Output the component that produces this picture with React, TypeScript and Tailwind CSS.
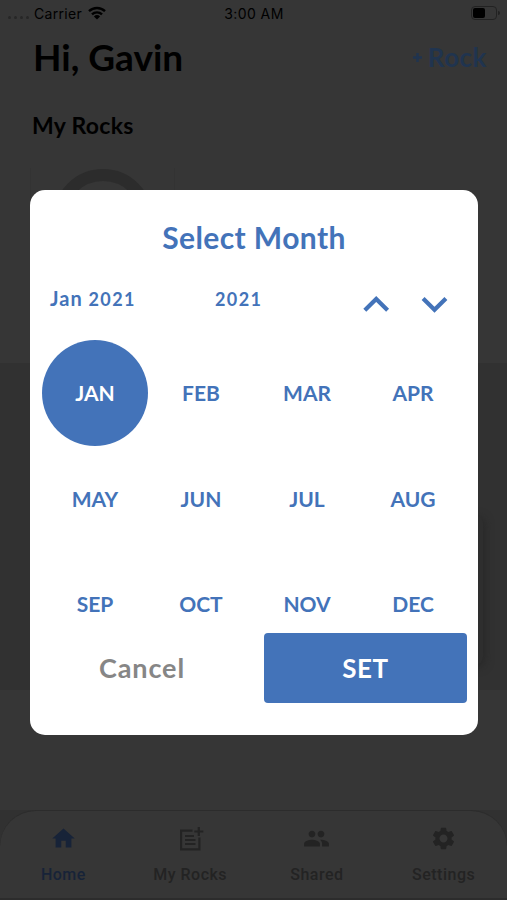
import { useState } from 'react';
import { MdHome, MdPeople, MdSettings } from 'react-icons/md';
import clsx from 'clsx';

const months = ['JAN', 'FEB', 'MAR', 'APR', 'MAY', 'JUN', 'JUL', 'AUG', 'SEP', 'OCT', 'NOV', 'DEC'];

function NoteAddIcon({ className }: { className?: string }) {
  return (
    <svg className={className} viewBox="0 0 27 27" fill="none" stroke="currentColor" strokeWidth="2.2">
      <path d="M15.5 5.6H4.1v18.8h18.3V12.5" />
      <path d="M8 11h9M8 15h10.5M8 19h10.5" />
      <path d="M21.8 2v9M17.3 6.5h9" />
    </svg>
  );
}

const tabs = [
  { name: 'Home', icon: MdHome, active: true },
  { name: 'My Rocks', icon: NoteAddIcon },
  { name: 'Shared', icon: MdPeople },
  { name: 'Settings', icon: MdSettings },
];

function StatusBar() {
  return (
    <div className="grid h-[26px] grid-cols-3 items-center pl-2 pr-[7px] font-['Inter',sans-serif] text-[14px] text-black">
      <div className="flex items-center">
        <div className="mt-2 flex w-[26px] gap-[3px]">
          {[0, 1, 2, 3].map((dot) => (
            <span key={dot} className="size-[3px] rounded-full bg-[#272727]" />
          ))}
        </div>
        <span className="tracking-[0.3px]">Carrier</span>
        <svg className="ml-[6px] h-[14px] w-[18px]" viewBox="0 0 18 14" fill="none" stroke="currentColor" strokeWidth="2.4">
          <path d="M1 5.2a11.5 11.5 0 0 1 16 0" />
          <path d="M4 8.4a7.2 7.2 0 0 1 10 0" />
          <path d="M9 13.6 5.9 10.4a4.5 4.5 0 0 1 6.2 0z" fill="currentColor" stroke="none" />
        </svg>
      </div>
      <span className="text-center tracking-[0.4px]">3:00 AM</span>
      <div className="flex items-center justify-end gap-px">
        <div className="h-[14px] w-[26px] rounded-[4px] border border-[#222] p-px">
          <div className="h-full w-[12px] rounded-[2px] bg-black" />
        </div>
        <div className="h-1 w-[2px] rounded-r bg-[#222]" />
      </div>
    </div>
  );
}

function TabBar() {
  return (
    <div className="h-[90px] bg-[#313131]">
      <div className="grid h-[88px] grid-cols-4 rounded-t-[36px] border-t border-[#2c2c2c] bg-[#363636] pt-[14px]">
        {tabs.map(({ name, icon: Icon, active }) => (
          <div
            key={name}
            className={clsx('flex flex-col items-center', active ? 'text-[#172338]' : 'text-[#232323]')}
          >
            <Icon className="size-[27px]" />
            <span className="mt-[12px] font-['Roboto',sans-serif] text-[16px] leading-[22px] font-medium tracking-[0.5px]">
              {name}
            </span>
          </div>
        ))}
      </div>
      <div className="h-[2px] bg-[#2c2c2c]" />
    </div>
  );
}

function Year({ value }: { value: number }) {
  return <span className="text-[18px] tracking-[1.4px]">{value}</span>;
}

function MonthPicker() {
  const [selected, setSelected] = useState(0);
  const [year, setYear] = useState(2021);

  return (
    <div className="absolute top-[190px] left-[30px] h-[545px] w-[448px] rounded-[15px] bg-white text-[#4373b9]">
      <h2 className="pt-[28px] text-center text-[30px] leading-[38px] font-bold tracking-[0.4px]">Select Month</h2>

      <div className="mt-[22px] flex h-[62px] items-start pl-[20px]">
        <div className="w-[165px] pt-[8px] text-[20px] leading-6 font-bold tracking-[1px]">
          Jan <Year value={2021} />
        </div>
        <div className="w-[146px] pt-[8px] text-[20px] leading-6 font-bold">
          <Year value={year} />
        </div>
        <button className="mt-[17px]" onClick={() => setYear(year + 1)}>
          <svg className="h-[18px] w-[29px]" viewBox="0 0 29 18" fill="none" stroke="currentColor" strokeWidth="4.2">
            <path d="M3.8 15.2 15.2 4 26.6 15.2" />
          </svg>
        </button>
        <button className="mt-[17px] ml-[30px]" onClick={() => setYear(year - 1)}>
          <svg className="h-[18px] w-[29px]" viewBox="0 0 29 18" fill="none" stroke="currentColor" strokeWidth="4.2">
            <path d="M3.1 3.5 14.5 14.7 25.9 3.5" />
          </svg>
        </button>
      </div>

      <div className="ml-[12px] grid w-[424px] grid-cols-4 auto-rows-[105.5px]">
        {months.map((month, i) => (
          <button
            key={month}
            className={clsx(
              'm-auto size-[106px] rounded-full text-[21px] font-bold',
              i === selected && 'bg-[#4373b9] text-white',
            )}
            onClick={() => setSelected(i)}
          >
            {month}
          </button>
        ))}
      </div>

      <div className="-mt-[24px] flex px-[11px] text-[26px] font-bold">
        <button className="h-[70px] w-[202px] pt-px text-[27px] tracking-[0.9px] text-[#868686]">Cancel</button>
        <button className="relative ml-[21px] h-[70px] w-[203px] rounded-[4px] bg-[#4373b9] pt-px tracking-[0.5px] text-white">
          SET
        </button>
      </div>
    </div>
  );
}

export default function App() {
  return (
    <div className="relative flex h-[900px] w-[507px] flex-col overflow-hidden bg-[#363636] font-['Lato',sans-serif]">
      <StatusBar />

      <div className="flex h-[62px] items-center justify-between pr-[20px] pl-[33px]">
        <h1 className="text-[37px] font-bold text-black">Hi, Gavin</h1>
        <div className="flex items-center gap-[6px] text-[#20344f]">
          <svg className="size-[9px]" viewBox="0 0 9 9" stroke="currentColor" strokeWidth="2.5">
            <path d="M4.5 0v9M0 4.5h9" />
          </svg>
          <span className="text-[26px] font-bold tracking-[0.5px]">Rock</span>
        </div>
      </div>

      <h3 className="mt-[21px] pl-[32px] text-[23px] leading-8 font-bold tracking-[0.3px] text-black">My Rocks</h3>

      <div className="mt-[27px] ml-[30px] flex h-[195px] w-[145px] justify-center border-x border-[#333]">
        <div className="mt-px size-[100px] rounded-full border-[12px] border-[#2c2c2c]" />
      </div>

      <div className="flex h-[327px] justify-end bg-[#313131] pt-[152px] pr-[24px]">
        <div className="h-[150px] w-[40px] rounded-lg bg-[#2e2e2e] shadow-[2px_2px_8px_#282828]" />
      </div>

      <div className="flex-1" />
      <TabBar />
      <MonthPicker />
    </div>
  );
}
